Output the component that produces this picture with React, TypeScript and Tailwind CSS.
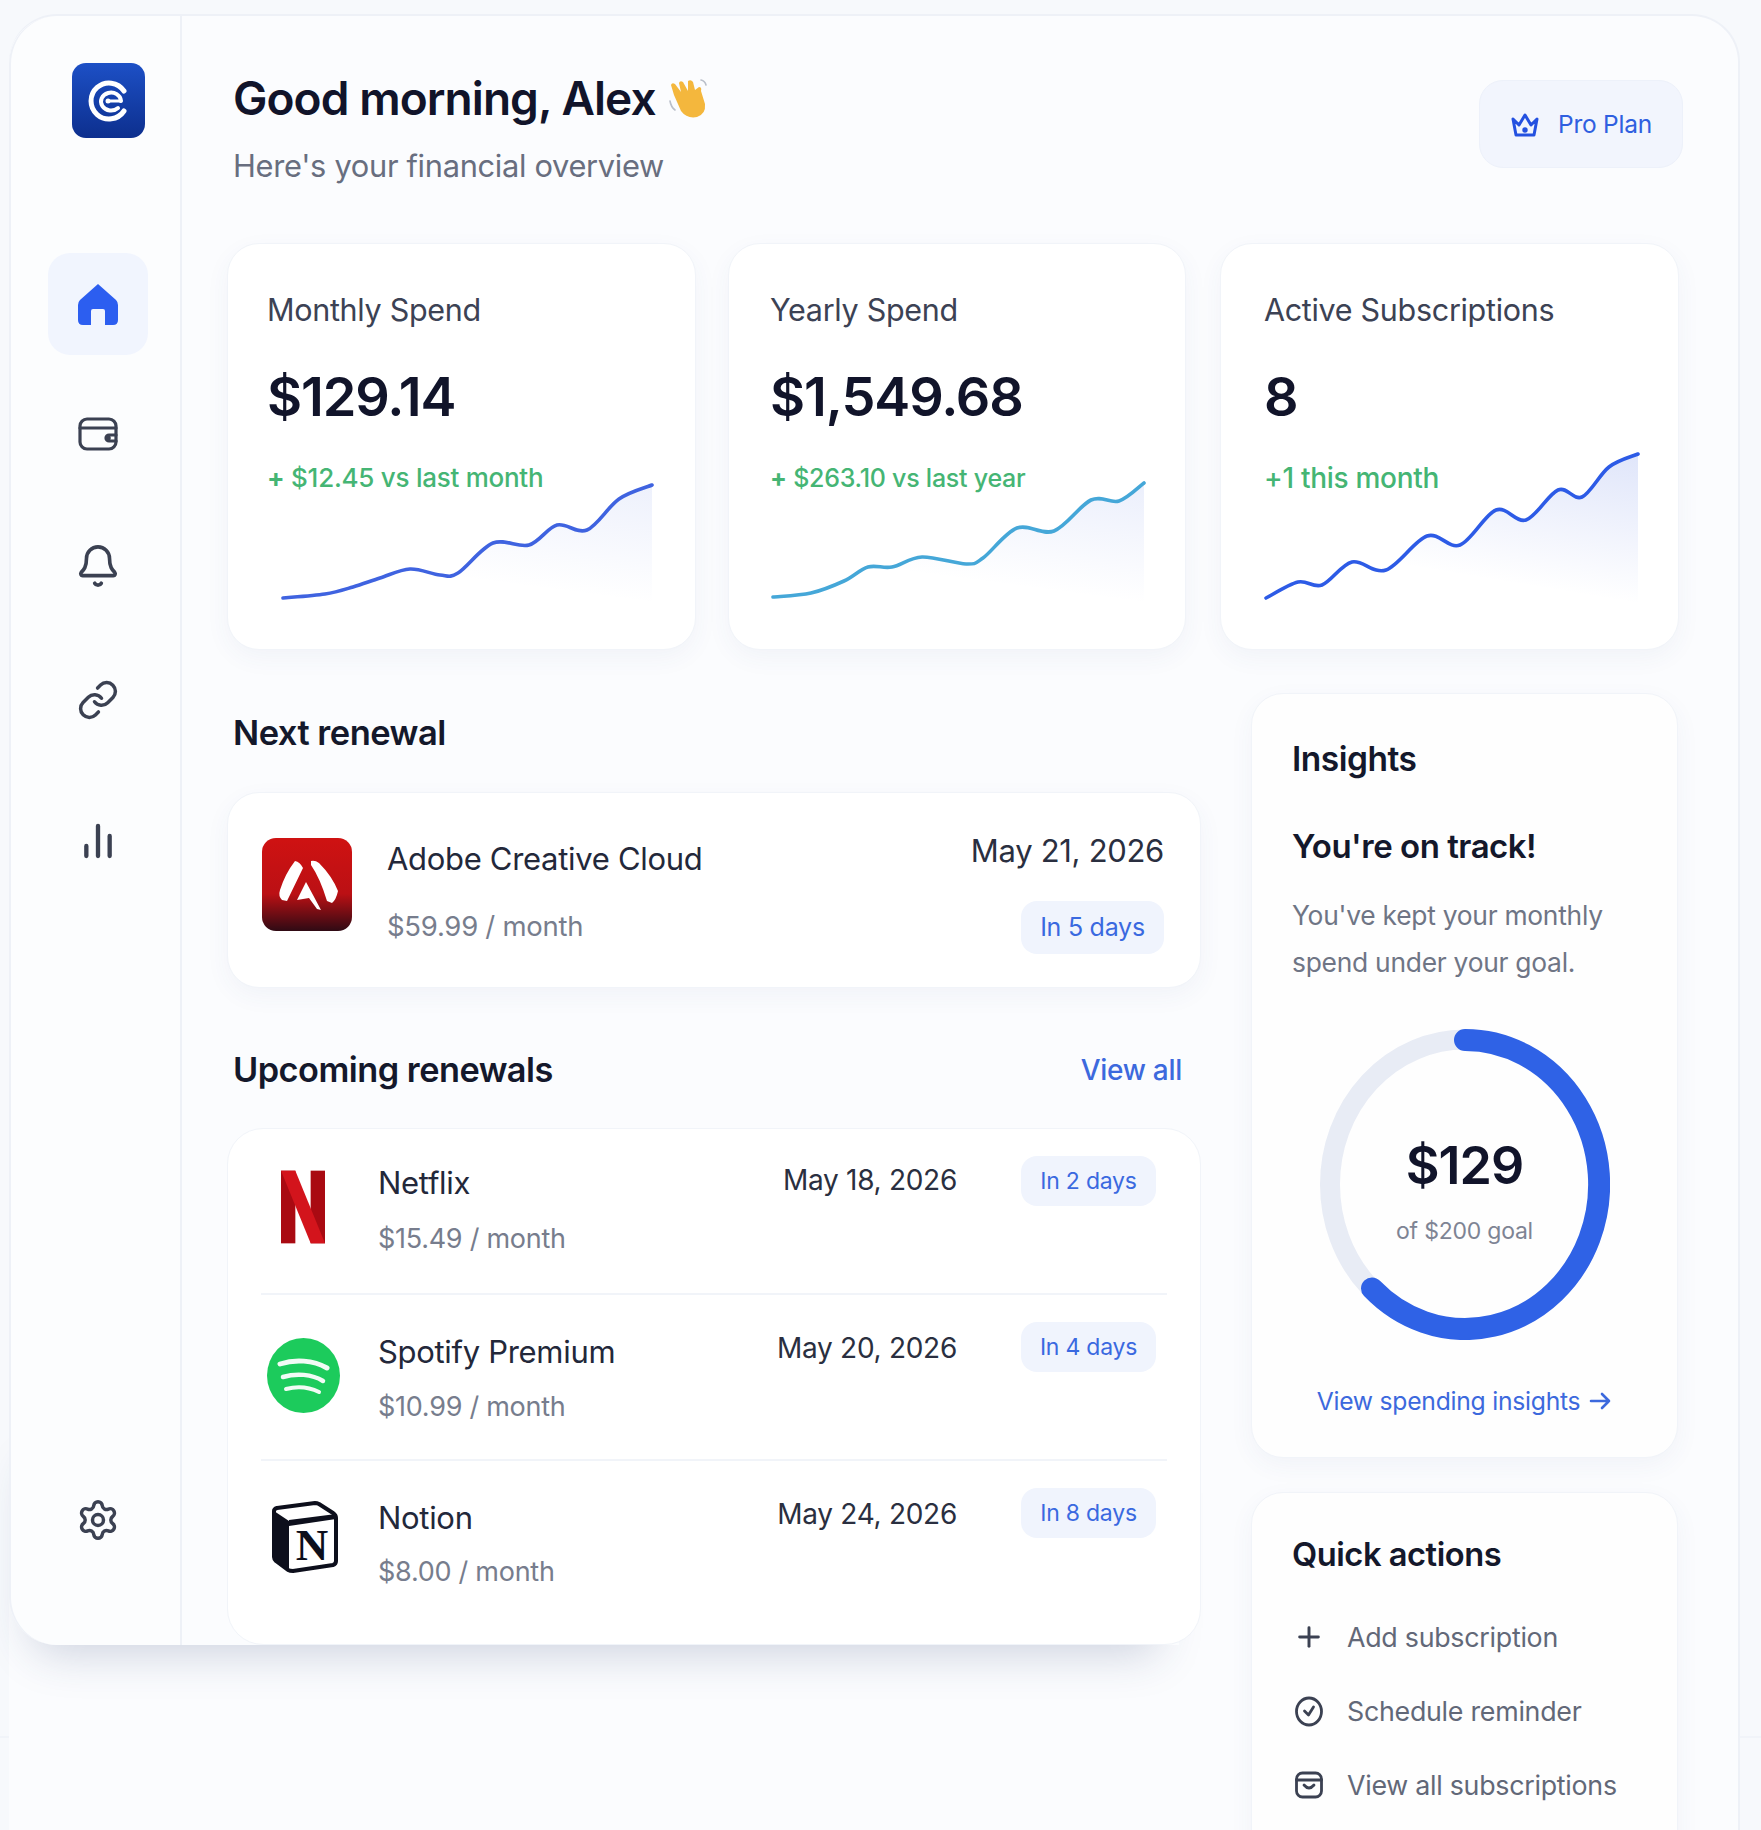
import { Bell, ChartNoAxesColumn, Link as LinkIcon, Plus, Settings } from "lucide-react";
import type { ReactNode } from "react";

type Pt = [number, number];

function smooth(p: Pt[]) {
  let d = `M${p[0][0]} ${p[0][1]}`;
  for (let i = 0; i < p.length - 1; i++) {
    const a = p[Math.max(0, i - 1)];
    const b = p[i];
    const c = p[i + 1];
    const e = p[Math.min(p.length - 1, i + 2)];
    d += ` C${b[0] + (c[0] - a[0]) / 6} ${b[1] + (c[1] - a[1]) / 6} ${c[0] - (e[0] - b[0]) / 6} ${c[1] - (e[1] - b[1]) / 6} ${c[0]} ${c[1]}`;
  }
  return d;
}

function Spark({ id, pts, color, left, strength }: { id: string; pts: Pt[]; color: string; left: number; strength: number }) {
  const line = smooth(pts);
  const last = pts[pts.length - 1];
  return (
    <svg viewBox={`${left} 450 400 152`} width={400} height={152} className="block -mt-[46px] overflow-visible">
      <defs>
        <linearGradient id={id} x1="0.95" y1="0" x2="0.6" y2="0.85">
          <stop offset="0" stopColor="#3f63e0" stopOpacity={strength} />
          <stop offset="1" stopColor="#3f63e0" stopOpacity="0" />
        </linearGradient>
      </defs>
      <path d={`${line} L${last[0]} 602 L${pts[0][0]} 602 Z`} fill={`url(#${id})`} />
      <path d={line} fill="none" stroke={color} strokeWidth="3.6" strokeLinecap="round" />
    </svg>
  );
}

function StatCard({ label, value, delta, chart, cls, deltaCls }: { label: string; value: string; delta: ReactNode; chart: ReactNode; cls: string; deltaCls: string }) {
  return (
    <div className={`h-[407px] rounded-[32px] bg-white border border-[#f1f4f9] shadow-[0_8px_24px_rgba(60,80,130,0.05)] pt-[46px] overflow-hidden ${cls}`}>
      <div className="text-[30.5px] leading-[40px] text-[#3c4254] tracking-[-0.01em] whitespace-nowrap">{label}</div>
      <div className="mt-[35px] text-[54px] leading-[64px] font-semibold text-[#11142a] tracking-[-0.02em]">{value}</div>
      <div className={`mt-[31px] leading-[36px] font-medium text-[#45b574] tracking-[-0.01em] whitespace-nowrap ${deltaCls}`}>{delta}</div>
      {chart}
    </div>
  );
}

function Badge({ children, cls }: { children: ReactNode; cls: string }) {
  return <div className={`flex items-center justify-center rounded-[16px] bg-[#f0f4fd] text-[#3a69e0] ${cls}`}>{children}</div>;
}

function AdobeIcon() {
  return (
    <svg viewBox="0 0 90 93" className="w-[90px] h-[93px] shrink-0">
      <defs>
        <linearGradient id="adobe" x1="0" y1="0" x2="0" y2="1">
          <stop offset="0" stopColor="#cf1212" />
          <stop offset="0.6" stopColor="#bb1014" />
          <stop offset="1" stopColor="#2f0a14" />
        </linearGradient>
      </defs>
      <rect width="90" height="93" rx="14" fill="url(#adobe)" />
      <path d="M33 23 Q38 24 41 30 L25 63 L20 62 Q16 58 18 52 Q23 36 33 23Z" fill="#fff" />
      <path d="M49 23 Q53 22 57 25 Q70 38 76 53 Q74 62 70 65 L65 63 Q58 40 49 27Z" fill="#fff" />
      <path d="M44 44 L51 57 L59 72 L55 71 L47 60 L35 62 Z" fill="#fff" />
    </svg>
  );
}

function NetflixIcon() {
  return (
    <svg viewBox="0 0 46 76" className="w-[44px] h-[76px] mt-[2px]">
      <rect x="0" y="0" width="15" height="76" fill="#a90a12" />
      <rect x="31" y="0" width="15" height="76" fill="#a90a12" />
      <path d="M0 0 H15 L46 76 H31 Z" fill="#d3141c" />
    </svg>
  );
}

function SpotifyIcon() {
  return (
    <svg viewBox="0 0 73 75" className="w-[73px] h-[75px] mt-[7px]">
      <ellipse cx="36.5" cy="37.5" rx="36.5" ry="37.5" fill="#1ccb5c" />
      <path d="M13 26 C28 21 46 22 60 30" fill="none" stroke="#f2fbf5" strokeWidth="5" strokeLinecap="round" />
      <path d="M16 39 C29 35 45 36 56 43" fill="none" stroke="#f2fbf5" strokeWidth="4.5" strokeLinecap="round" />
      <path d="M19 51 C30 48 42 49 52 54" fill="none" stroke="#f2fbf5" strokeWidth="4" strokeLinecap="round" />
    </svg>
  );
}

function NotionIcon() {
  return (
    <svg viewBox="0 0 68 72" className="w-[68px] h-[72px] ml-[4px] -mt-[3px]">
      <path d="M3 10 Q3 8 6 7 L44 2 Q46 2 48 3 L62 12 Q65 14 65 17 V60 Q65 63 62 64 L22 70 Q19 70 17 69 L5 60 Q3 58 3 56 Z" fill="#fff" stroke="#0d0f1c" strokeWidth="4" strokeLinejoin="round" />
      <path d="M3 10 L18 20 V69 L5 60 Q3 58 3 56 Z" fill="#0d0f1c" />
      <path d="M18 19 L65 13 V18 L18 25 Z" fill="#0d0f1c" />
      <text x="41" y="59" textAnchor="middle" fontFamily="'Liberation Serif', serif" fontWeight="700" fontSize="45" fill="#0d0f1c">N</text>
    </svg>
  );
}

function Row({ icon, name, price, date, badge, divider, nameCls, priceCls, dateCls }: { icon: ReactNode; name: string; price: string; date: string; badge: string; divider: boolean; nameCls: string; priceCls: string; dateCls: string }) {
  return (
    <div className={`mx-[33px] flex items-start pt-[27px] ${divider ? "h-[166px] border-b-2 border-[#f1f4f9]" : "h-[164px]"}`}>
      <div className="w-[84px] h-[100px] flex items-center justify-center shrink-0">{icon}</div>
      <div className={`ml-[33px] flex-1 ${nameCls}`}>
        <div className="text-[31px] leading-[40px] text-[#23283a] tracking-[-0.01em]">{name}</div>
        <div className={`text-[27px] leading-[40px] text-[#777d8d] tracking-[-0.01em] ${priceCls}`}>{price}</div>
      </div>
      <div className={`text-[28px] leading-[40px] text-[#2a2f40] tracking-[-0.01em] whitespace-nowrap ${dateCls}`}>{date}</div>
      <Badge cls="ml-[64px] mr-[11px] w-[135px] h-[50px] text-[23px] tracking-[-0.01em]">{badge}</Badge>
    </div>
  );
}

function Gauge() {
  return (
    <div className="relative mt-[43px] mx-auto w-[290px] h-[311px]">
      <svg viewBox="0 0 290 311" className="w-[290px] h-[311px]">
        <ellipse cx="145" cy="155.5" rx="135" ry="145" fill="none" stroke="#e8ecf5" strokeWidth="20" />
        <path d="M145 11 A134 144.5 0 1 1 52 259.4" fill="none" stroke="#2f62e6" strokeWidth="22" strokeLinecap="round" />
      </svg>
      <div className="absolute inset-0 flex flex-col items-center">
        <div className="mt-[103px] text-[52px] leading-[68px] font-semibold text-[#11142a] tracking-[-0.02em]">$129</div>
        <div className="mt-[15px] text-[23px] leading-[32px] text-[#7e8494] tracking-[-0.01em]">of $200 goal</div>
      </div>
    </div>
  );
}

function WalletGlyph({ cls, color }: { cls: string; color: string }) {
  return (
    <svg viewBox="0 0 40 36" className={cls} fill="none" stroke={color} strokeWidth="3.2" strokeLinecap="round" strokeLinejoin="round">
      <rect x="2" y="3" width="36" height="30" rx="7" />
      <path d="M2 12 H38" />
      <path d="M38 19 H31 a3 3 0 0 0 0 6 H38" />
      <circle cx="30" cy="22" r="1.2" fill={color} />
    </svg>
  );
}

const NAV_CLS = "h-[102px] w-[100px] ml-[37px] flex items-center justify-center";
const ACTION_CLS = "flex h-[40px] items-center gap-[21px] text-[26.8px] text-[#626878] tracking-[-0.01em]";
const H2_CLS = "font-semibold text-[#14182b] tracking-[-0.015em] leading-[44px]";
const CARD_CLS = "rounded-[32px] border border-[#f1f4f9] bg-[#fefefe] shadow-[0_8px_24px_rgba(60,80,130,0.05)]";

export default function App() {
  return (
    <div className="relative h-[1830px] w-[1761px] overflow-hidden bg-[#f7f9fc] font-['Inter',sans-serif] pt-[14px] pl-[9px]">
      <div className="absolute left-0 right-0 top-[1736px] h-[2px] bg-[#f1f4f9]" />
      <div className="relative flex h-[1816px] w-[1731px] rounded-t-[48px] border-t-2 border-r-2 border-[#eef1f7] bg-[#fbfcfe]">
        <div className="absolute left-0 top-[1400px] h-[229px] w-[1170px] rounded-bl-[48px] shadow-[0_30px_46px_-22px_rgba(40,60,110,0.22)]" />
        <aside className="relative flex h-[1629px] w-[173px] shrink-0 flex-col rounded-tl-[48px] rounded-bl-[48px] border-l-2 border-r-2 border-[#eef1f7] bg-[#fcfdfe] pt-[47px]">
          <div className="ml-[61px] flex h-[75px] w-[73px] items-center justify-center rounded-[14px] bg-gradient-to-b from-[#1d50c6] to-[#0d2f8e]">
            <svg viewBox="0 0 48 48" className="h-[48px] w-[48px]" fill="none" stroke="#fff" strokeLinecap="round">
              <path d="M39 14 A18 18 0 1 0 39 34" strokeWidth="5" />
              <path d="M36 24 A10 9 0 1 0 33 31" strokeWidth="4" />
              <path d="M24 24 H36" strokeWidth="3" />
              <circle cx="23" cy="24" r="2.5" fill="#fff" stroke="none" />
            </svg>
          </div>
          <div className={`${NAV_CLS} mt-[115px] rounded-[22px] bg-[#f1f5fe]`}>
            <svg viewBox="0 0 40 42" className="h-[42px] w-[40px]" fill="#2c5ef0">
              <path d="M20 1 L38 17 Q40 19 40 22 V37 Q40 42 35 42 H27 V28 Q27 26 25 26 H15 Q13 26 13 28 V42 H5 Q0 42 0 37 V22 Q0 19 2 17 Z" />
            </svg>
          </div>
          <div className={`${NAV_CLS} mt-[28px]`}>
            <WalletGlyph cls="h-[36px] w-[40px]" color="#3b4152" />
          </div>
          <div className={`${NAV_CLS} mt-[30px]`}>
            <Bell size={46} strokeWidth={1.9} color="#3b4152" />
          </div>
          <div className={`${NAV_CLS} mt-[32px]`}>
            <LinkIcon size={42} strokeWidth={2} color="#3b4152" />
          </div>
          <div className={`${NAV_CLS} mt-[39px]`}>
            <ChartNoAxesColumn size={40} strokeWidth={2.6} color="#3b4152" />
          </div>
          <div className={`${NAV_CLS} mt-auto mb-[74px]`}>
            <Settings size={44} strokeWidth={1.9} color="#3b4152" />
          </div>
        </aside>

        <main className="relative flex-1 pl-[45px] pr-[58px]">
          <header className="flex h-[227px] items-start justify-between pl-[6px]">
            <div className="pt-[54px]">
              <div className="flex items-center">
                <h1 className="text-[46px] leading-[56px] font-semibold text-[#11142a] tracking-[-0.02em] whitespace-nowrap">Good morning, Alex</h1>
                <svg viewBox="0 0 40 42" className="ml-[12px] h-[42px] w-[40px]">
                  <path d="M6 18 L3 8 Q4 5 7 7 L13 15 L11 6 Q12 3 15 5 L20 14 L20 4 Q23 2 25 5 L27 13 L31 10 Q34 10 33 14 L37 27 Q38 37 29 40 Q19 42 13 34 Z" fill="#f4b73d" />
                  <path d="M2 24 Q3 30 7 33 M33 3 Q37 4 38 8" fill="none" stroke="#b9bfca" strokeWidth="1.6" strokeLinecap="round" />
                </svg>
              </div>
              <p className="mt-[20px] text-[30.8px] leading-[40px] text-[#686e7f] tracking-[-0.01em] whitespace-nowrap">Here's your financial overview</p>
            </div>
            <div className="mt-[64px] -mr-[3px] flex h-[88px] w-[204px] items-center justify-center gap-[18px] rounded-[24px] border border-[#edf1fa] bg-[#f2f5fd] text-[24.5px] tracking-[-0.01em] text-[#2f5fe0]">
              <svg viewBox="0 0 30 26" className="h-[26px] w-[30px]" fill="none" stroke="#2451e0" strokeWidth="3" strokeLinejoin="round" strokeLinecap="round">
                <path d="M3 8 L9 14 L15 4 L21 14 L27 8 L24 24 H6 Z" />
                <circle cx="15" cy="19" r="1.2" fill="#2451e0" />
              </svg>
              <span>Pro Plan</span>
            </div>
          </header>

          <section className="flex gap-[32px]">
            <div className="w-[469px]">
              <StatCard
                cls="pl-[39px]"
                deltaCls="text-[26px]"
                label="Monthly Spend"
                value="$129.14"
                delta={<><span className="font-bold">+</span> $12.45 vs last month</>}
                chart={<Spark id="s1" left={268} strength={0.09} color="#3f63e0" pts={[[284, 598], [326, 594], [354, 587], [381, 578], [411, 569], [441, 575], [459, 573], [494, 543], [530, 545], [558, 525], [588, 530], [620, 499], [653, 485]]} />}
              />
            </div>
            <div className="w-[458px]">
              <StatCard
                cls="pl-[41px]"
                deltaCls="text-[25px]"
                label="Yearly Spend"
                value="$1,549.68"
                delta={<><span className="font-bold">+</span> $263.10 vs last year</>}
                chart={<Spark id="s2" left={771} strength={0.1} color="#45a7d8" pts={[[774, 597], [812, 593], [845, 581], [869, 567], [893, 567], [923, 557], [967, 564], [984, 558], [1018, 528], [1055, 531], [1092, 500], [1120, 501], [1145, 483]]} />}
              />
            </div>
            <div className="ml-[2px] w-[459px]">
              <StatCard
                cls="pl-[43px]"
                deltaCls="text-[28px]"
                label="Active Subscriptions"
                value="8"
                delta="+1 this month"
                chart={<Spark id="s3" left={1265} strength={0.16} color="#2d5be6" pts={[[1267, 598], [1299, 582], [1323, 585], [1353, 562], [1387, 570], [1428, 536], [1461, 545], [1497, 510], [1527, 520], [1559, 490], [1583, 497], [1610, 467], [1639, 454]]} />}
              />
            </div>
          </section>

          <section className="flex items-start gap-[50px]">
            <div className="w-[974px] shrink-0 pt-[61px]">
              <h2 className={`pl-[6px] text-[34.5px] ${H2_CLS}`}>Next renewal</h2>
              <div className="mt-[37px] flex h-[196px] items-start rounded-[32px] border border-[#f1f4f9] bg-white pl-[34px] pr-[36px] pt-[45px] shadow-[0_8px_24px_rgba(60,80,130,0.05)]">
                <AdobeIcon />
                <div className="ml-[35px] flex-1 pt-[1px]">
                  <div className="text-[31px] leading-[40px] text-[#23283a] tracking-[-0.01em]">Adobe Creative Cloud</div>
                  <div className="mt-[27px] text-[27.5px] leading-[40px] text-[#777d8d] tracking-[-0.01em]">$59.99 / month</div>
                </div>
                <div className="-mt-[7px] flex flex-col items-end">
                  <div className="text-[31px] leading-[40px] text-[#2a2f40] tracking-[-0.01em]">May 21, 2026</div>
                  <Badge cls="mt-[30px] h-[53px] w-[143px] text-[25px] tracking-[-0.01em]">In 5 days</Badge>
                </div>
              </div>
              <div className="mt-[60px] flex items-center justify-between pl-[6px] pr-[19px]">
                <h2 className={`text-[34.3px] ${H2_CLS}`}>Upcoming renewals</h2>
                <span className="text-[28px] leading-[40px] font-medium text-[#3c69dd] tracking-[-0.01em]">View all</span>
              </div>
              <div className="mt-[36px] h-[517px] rounded-[36px] border border-[#f1f4f9] bg-white">
                <Row icon={<NetflixIcon />} name="Netflix" price="$15.49 / month" date="May 18, 2026" badge="In 2 days" divider nameCls="pt-[7px]" priceCls="mt-[16px]" dateCls="pt-[4px]" />
                <Row icon={<SpotifyIcon />} name="Spotify Premium" price="$10.99 / month" date="May 20, 2026" badge="In 4 days" divider nameCls="pt-[10px]" priceCls="mt-[15px]" dateCls="pt-[6px]" />
                <Row icon={<NotionIcon />} name="Notion" price="$8.00 / month" date="May 24, 2026" badge="In 8 days" divider={false} nameCls="pt-[10px]" priceCls="mt-[14px]" dateCls="pt-[6px]" />
              </div>
            </div>

            <div className="w-[427px] shrink-0 pt-[43px]">
              <div className={`h-[765px] px-[40px] pt-[43px] ${CARD_CLS}`}>
                <h2 className={`text-[33.5px] ${H2_CLS}`}>Insights</h2>
                <h3 className={`mt-[43px] text-[33px] ${H2_CLS}`}>You're on track!</h3>
                <p className="mt-[24px] text-[26.4px] leading-[47px] text-[#6f7585] tracking-[-0.01em] whitespace-nowrap">You've kept your monthly<br />spend under your goal.</p>
                <Gauge />
                <div className="mt-[43px] flex items-center justify-center gap-[8px] text-[24.7px] leading-[36px] text-[#3c69dd] tracking-[-0.01em] whitespace-nowrap">
                  <span>View spending insights</span>
                  <svg viewBox="0 0 24 24" className="h-[24px] w-[24px]" fill="none" stroke="#3c69dd" strokeWidth="2.6" strokeLinecap="round" strokeLinejoin="round">
                    <path d="M3 12 H21 M14 5 L21 12 L14 19" />
                  </svg>
                </div>
              </div>
              <div className={`mt-[34px] h-[380px] px-[40px] pt-[39px] ${CARD_CLS}`}>
                <h2 className={`text-[32.7px] ${H2_CLS}`}>Quick actions</h2>
                <div className="mt-[41px] flex flex-col gap-[34px]">
                  <div className={ACTION_CLS}>
                    <span className="flex w-[34px] justify-center"><Plus size={32} strokeWidth={2.2} color="#3b4152" /></span>
                    <span>Add subscription</span>
                  </div>
                  <div className={ACTION_CLS}>
                    <span className="flex w-[34px] justify-center">
                      <svg viewBox="0 0 30 32" className="h-[32px] w-[30px]" fill="none" stroke="#3b4152" strokeWidth="2.8" strokeLinecap="round" strokeLinejoin="round">
                        <ellipse cx="15" cy="16.5" rx="12.5" ry="13.5" />
                        <path d="M10.5 16 L14.5 20 L19.5 12" />
                      </svg>
                    </span>
                    <span>Schedule reminder</span>
                  </div>
                  <div className={ACTION_CLS}>
                    <span className="flex w-[34px] justify-center">
                      <svg viewBox="0 0 30 30" className="h-[30px] w-[30px]" fill="none" stroke="#3b4152" strokeWidth="2.8" strokeLinecap="round" strokeLinejoin="round">
                        <rect x="2.5" y="3" width="25" height="24" rx="6" />
                        <path d="M2.5 10 H27.5 M10 15 Q15 21 20 15" />
                      </svg>
                    </span>
                    <span>View all subscriptions</span>
                  </div>
                </div>
              </div>
            </div>
          </section>
        </main>
      </div>
    </div>
  );
}
